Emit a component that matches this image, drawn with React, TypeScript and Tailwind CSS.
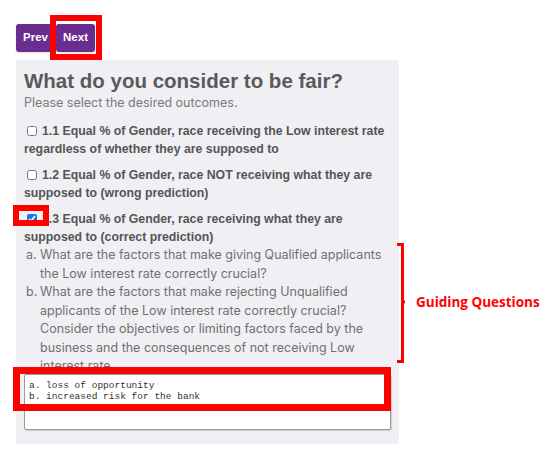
import React from "react";

export default function App() {
  return (
    <div className="relative w-[558px] h-[461px] bg-white overflow-hidden" style={{ fontFamily: "Inter, 'Liberation Sans', sans-serif" }}>
      <div className="pt-6 pl-4 flex gap-[1px]" style={{ fontFamily: "'Liberation Sans', Arial, sans-serif" }}>
        <button className="w-[39px] h-[28px] rounded-[3px] bg-[#6a2c8e] text-white text-[11.5px] font-bold shadow-sm">Prev</button>
        <button className="w-[39px] h-[28px] rounded-[3px] bg-[#6a2c8e] text-white text-[11.5px] font-bold shadow-sm">Next</button>
      </div>
      <div className="ml-4 mt-2 w-[383px] bg-[#f0eff4] px-2 pt-[9px] pb-[14px]">
        <h2 className="text-[20.5px] leading-[24px] font-bold text-[#5a5a5a]" style={{ fontFamily: "'Liberation Sans', Arial, sans-serif" }}>
          What do you consider to be fair?
        </h2>
        <p className="mt-[1px] text-[12.5px] leading-[18px] text-[#7a7a7a]">Please select the desired outcomes.</p>
        <div className="mt-[10px] flex flex-col gap-[8px] text-[12.3px] leading-[18px] font-bold text-[#555]" style={{ fontFamily: "'Liberation Sans', Arial, sans-serif" }}>
          <label className="block">
            <input type="checkbox" className="ml-[3px] mr-[5px] w-[10px] h-[10px] align-[-1px]" />
            1.1 Equal % of Gender, race receiving the Low interest rate regardless of whether they are supposed to
          </label>
          <label className="block">
            <input type="checkbox" className="ml-[3px] mr-[5px] w-[10px] h-[10px] align-[-1px]" />
            1.2 Equal % of Gender, race NOT receiving what they are supposed to (wrong prediction)
          </label>
          <label className="block">
            <input type="checkbox" defaultChecked className="ml-[3px] mr-[5px] w-[10px] h-[10px] align-[-1px] accent-[#1a73e8]" />
            1.3 Equal % of Gender, race receiving what they are supposed to (correct prediction)
          </label>
        </div>
        <div className="h-[128px] overflow-hidden text-[12.5px] leading-[18.5px] text-[#707070]">
          <div className="flex ml-[2px]">
            <span className="w-[14px] shrink-0">a.</span>
            <span>What are the factors that make giving Qualified applicants the Low interest rate correctly crucial?</span>
          </div>
          <div className="flex ml-[2px]">
            <span className="w-[14px] shrink-0">b.</span>
            <span>What are the factors that make rejecting Unqualified applicants of the Low interest rate correctly crucial? Consider the objectives or limiting factors faced by the business and the consequences of not receiving Low interest rate</span>
          </div>
        </div>
        <textarea
          readOnly
          className="block w-[367px] h-[56px] rounded-[2px] border border-[#9a9a9a] bg-white px-[4px] pt-[5px] text-[9.5px] leading-[11px] text-[#333] resize-none shadow-[1px_1px_1px_rgba(0,0,0,0.15)]"
          style={{ fontFamily: "'Liberation Mono', 'DejaVu Sans Mono', monospace" }}
          defaultValue={"a. loss of opportunity\nb. increased risk for the bank"}
        />
      </div>

      {/* annotations */}
      <div className="absolute left-[50px] top-[15px] w-[52px] h-[45px] border-[6px] border-[#ff0000]" />
      <div className="absolute left-[13px] top-[205px] w-[36px] h-[21px] border-[6px] border-[#ff0000]" />
      <div className="absolute left-[13px] top-[367px] w-[378px] h-[44px] border-[7px] border-[#ff0000]" />
      <svg className="absolute left-[394px] top-[242px]" width="16" height="122" viewBox="0 0 16 122">
        <path d="M3 2.5 H8.5 V119.5 H3" fill="none" stroke="#ff0000" strokeWidth="3" />
        <path d="M8.5 60 H11" stroke="#ff0000" strokeWidth="3" />
      </svg>
      <div className="absolute left-[416px] top-[294px] text-[13.5px] leading-[17px] font-bold text-[#ff0000]" style={{ fontFamily: "'Open Sans', sans-serif" }}>
        Guiding Questions
      </div>
    </div>
  );
}
